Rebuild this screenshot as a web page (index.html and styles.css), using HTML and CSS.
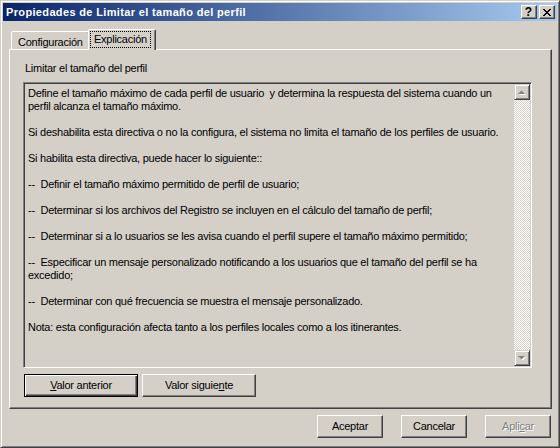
FILE: index.html
```html
<!DOCTYPE html>
<html lang="es">
<head>
  <meta charset="UTF-8" />
  <title>Propiedades de Limitar el tamaño del perfil</title>
  <link rel="stylesheet" href="styles.css">
</head>
<body>
  <div class="window">
    <div class="titlebar">
      <span class="title">Propiedades de Limitar el tamaño del perfil</span>
      <div class="caption-buttons">
        <span class="caption-btn help">?</span>
        <span class="caption-btn close">
          <svg width="8" height="7" viewBox="0 0 8 7" shape-rendering="crispEdges">
            <path d="M0 0h2v1H0z M6 0h2v1H6z M1 1h2v1H1z M5 1h2v1H5z M2 2h4v1H2z M3 3h2v1H3z M2 4h4v1H2z M1 5h2v1H1z M5 5h2v1H5z M0 6h2v1H0z M6 6h2v1H6z" fill="#000"/>
          </svg>
        </span>
      </div>
    </div>

    <div class="client">
      <div class="tabs">
        <div class="tab tab-config">Configuración</div>
        <div class="tab tab-explain active"><span class="focus">Explicación</span></div>
      </div>

      <div class="tab-panel">
        <div class="field-label">Limitar el tamaño del perfil</div>

        <div class="explain-box">
          <div class="explain-text">
            <p>Define el tamaño máximo de cada perfil de usuario&nbsp; y determina la respuesta del sistema cuando un<br>perfil alcanza el tamaño máximo.</p>
            <p>Si deshabilita esta directiva o no la configura, el sistema no limita el tamaño de los perfiles de usuario.</p>
            <p>Si habilita esta directiva, puede hacer lo siguiente::</p>
            <p>--&nbsp; Definir el tamaño máximo permitido de perfil de usuario;</p>
            <p>--&nbsp; Determinar si los archivos del Registro se incluyen en el cálculo del tamaño de perfil;</p>
            <p>--&nbsp; Determinar si a lo usuarios se les avisa cuando el perfil supere el tamaño máximo permitido;</p>
            <p>--&nbsp; Especificar un mensaje personalizado notificando a los usuarios que el tamaño del perfil se ha<br>excedido;</p>
            <p>--&nbsp; Determinar con qué frecuencia se muestra el mensaje personalizado.</p>
            <p>Nota: esta configuración afecta tanto a los perfiles locales como a los itinerantes.</p>
          </div>
          <div class="scrollbar">
            <div class="scroll-btn">
              <svg width="8" height="5" viewBox="0 0 8 5">
                <polygon points="1,5 4.5,1.5 8,5" fill="#fff"/>
                <polygon points="0,4 3.5,0.5 7,4" fill="#808080"/>
              </svg>
            </div>
            <div class="scroll-track"></div>
            <div class="scroll-btn">
              <svg width="8" height="5" viewBox="0 0 8 5">
                <polygon points="1,1 8,1 4.5,4.5" fill="#fff"/>
                <polygon points="0,0 7,0 3.5,3.5" fill="#808080"/>
              </svg>
            </div>
          </div>
        </div>

        <div class="nav-buttons">
          <button class="btn btn-default btn-wide"><u>V</u>alor anterior</button>
          <button class="btn btn-wide">Valor siguie<u>n</u>te</button>
        </div>
      </div>

      <div class="dialog-buttons">
        <button class="btn">Aceptar</button>
        <button class="btn">Cancelar</button>
        <button class="btn" disabled>Apli<u>c</u>ar</button>
      </div>
    </div>
  </div>
</body>
</html>
```

FILE: styles.css
```css
:root {
  --face: #d4d0c8;
  --shadow: #808080;
  --dark: #404040;
  --light: #ffffff;
}

html, body {
  margin: 0;
  padding: 0;
  background: var(--face);
  font-family: 'Liberation Sans', Arial, sans-serif;
  font-size: 11px;
  line-height: 13px;
  letter-spacing: -0.25px;
  color: #000;
}

.window {
  width: 560px;
  height: 448px;
  box-sizing: border-box;
  border: 1px solid;
  border-color: var(--face) var(--dark) var(--dark) var(--face);
  box-shadow: inset 1px 1px var(--light), inset -1px -1px var(--shadow);
  padding: 2px;
  background: var(--face);
}

/* title bar */
.titlebar {
  height: 18px;
  display: flex;
  align-items: center;
  justify-content: space-between;
  padding: 0 2px 0 3px;
  background: linear-gradient(to right, #0a246a, #a6caf0);
  color: #fff;
}

.title {
  font-weight: bold;
  letter-spacing: 0.35px;
  white-space: nowrap;
}

.caption-buttons {
  display: flex;
  gap: 2px;
}

.caption-btn {
  width: 16px;
  height: 14px;
  box-sizing: border-box;
  border: 1px solid;
  border-color: var(--light) var(--dark) var(--dark) var(--light);
  box-shadow: inset -1px -1px var(--shadow);
  background: var(--face);
  display: flex;
  align-items: center;
  justify-content: center;
}

.caption-btn.help {
  color: #000;
  font-weight: bold;
  font-size: 12px;
  line-height: 12px;
  letter-spacing: 0;
  padding-right: 1px;
}

/* client area */
.client {
  padding: 8px 5px 0 6px;
}

.tabs {
  display: flex;
  align-items: flex-end;
  height: 20px;
  padding-left: 2px;
}

.tab {
  box-sizing: border-box;
  height: 18px;
  border: 1px solid;
  border-bottom: none;
  border-color: var(--light) var(--dark) transparent var(--light);
  box-shadow: inset -1px 0 var(--shadow);
  border-radius: 2px 2px 0 0;
  padding: 4px 0 0 6px;
  background: var(--face);
  white-space: nowrap;
}

.tab-config {
  width: 79px;
}

.tab-explain {
  width: 68px;
}

.tab.active {
  position: relative;
  z-index: 1;
  height: 21px;
  margin-left: -2px;
  margin-bottom: -1px;
  padding: 2px 0 0 2px;
}

.focus {
  display: inline-block;
  padding: 1px 3px;
  outline: 1px dotted #000;
}

.tab-panel {
  box-sizing: border-box;
  height: 360px;
  border: 1px solid;
  border-color: var(--light) var(--dark) var(--dark) var(--light);
  box-shadow: inset -1px -1px var(--shadow);
  padding: 12px 0 0 13px;
}

.field-label {
  margin-left: 2px;
}

.explain-box {
  box-sizing: border-box;
  width: 509px;
  height: 286px;
  margin-top: 7px;
  display: flex;
  border: 1px solid;
  border-color: var(--shadow) var(--light) var(--light) var(--shadow);
  box-shadow: inset 1px 1px var(--dark), inset -1px -1px var(--face);
  padding: 1px;
}

.explain-text {
  flex: 1;
  padding: 3px 0 0 3px;
  overflow: hidden;
}

.explain-text p {
  margin: 0 0 13px;
  white-space: nowrap;
}

.scrollbar {
  width: 16px;
  display: flex;
  flex-direction: column;
}

.scroll-track {
  flex: 1;
  background: repeating-conic-gradient(var(--light) 0 25%, var(--face) 0 50%) 0 0 / 2px 2px;
}

.scroll-btn {
  box-sizing: border-box;
  height: 16px;
  border: 1px solid;
  border-color: var(--face) var(--dark) var(--dark) var(--face);
  box-shadow: inset 1px 1px var(--light), inset -1px -1px var(--shadow);
  background: var(--face);
  display: flex;
  align-items: center;
  justify-content: center;
}

/* buttons */
.btn {
  box-sizing: border-box;
  width: 66px;
  height: 23px;
  padding: 0;
  font: inherit;
  letter-spacing: inherit;
  color: #000;
  background: var(--face);
  border: 1px solid;
  border-color: var(--light) var(--dark) var(--dark) var(--light);
  box-shadow: inset -1px -1px var(--shadow);
  border-radius: 0;
}

.btn-wide {
  width: 114px;
}

.btn-default {
  border-color: #000;
  box-shadow: inset 1px 1px var(--light), inset -1px -1px var(--dark), inset -2px -2px var(--shadow);
}

.btn:disabled {
  color: var(--shadow);
  text-shadow: 1px 1px var(--light);
}

.nav-buttons {
  display: flex;
  gap: 4px;
  margin: 6px 0 0 1px;
}

.dialog-buttons {
  display: flex;
  justify-content: flex-end;
  gap: 18px;
  margin: 6px 1px 0 0;
}
```
